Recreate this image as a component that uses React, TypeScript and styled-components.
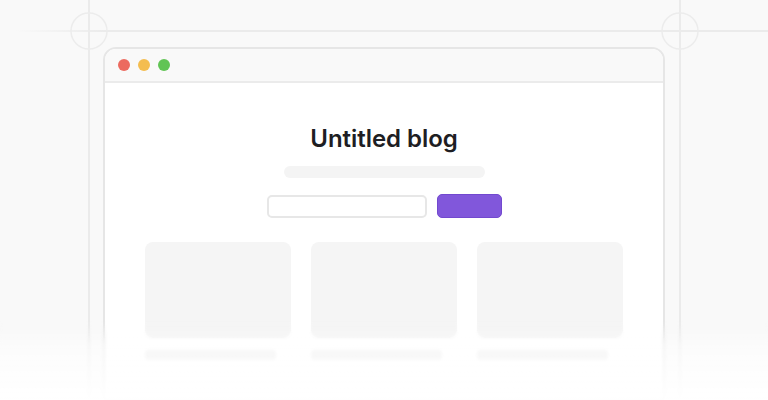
import React from "react";
import styled, { createGlobalStyle } from "styled-components";

const Global = createGlobalStyle`
  html, body { margin: 0; padding: 0; background: #f9f9f9; }
  body { font-family: Inter, "Noto Sans", sans-serif; }
`;

const Page = styled.div`
  position: relative;
  width: 768px;
  height: 400px;
  overflow: hidden;
  background: #f9f9f9;
  display: flex;
  flex-direction: column;
  align-items: flex-start;
  padding: 47px 0 0 103px;
  box-sizing: border-box;
`;

const Guides = styled.svg`
  position: absolute;
  left: 0;
  top: 0;
  width: 768px;
  height: 400px;
  pointer-events: none;
`;

const Window = styled.div`
  position: relative;
  width: 562px;
  height: 420px;
  box-sizing: border-box;
  border: 2px solid #e6e6e6;
  border-radius: 13px 13px 0 0;
  background: #fff;
  overflow: hidden;
  display: flex;
  flex-direction: column;
`;

const TitleBar = styled.div`
  height: 32px;
  flex: none;
  background: #f9f9f9;
  border-bottom: 2px solid #ebebeb;
  display: flex;
  align-items: center;
  gap: 8px;
  padding: 0 0 0 13px;
`;

const Dot = styled.span<{ $c: string }>`
  width: 12px;
  height: 12px;
  border-radius: 50%;
  background: ${(p) => p.$c};
`;

const Content = styled.div`
  display: flex;
  flex-direction: column;
  align-items: center;
  padding-top: 41px;
`;

const Title = styled.h1`
  margin: 0;
  font-family: Inter, sans-serif;
  font-size: 24px;
  line-height: 29px;
  font-weight: 600;
  color: #1e1e23;
  letter-spacing: -0.05px;
`;

const Subtitle = styled.div`
  margin-top: 13px;
  width: 201px;
  height: 12px;
  border-radius: 6px;
  background: #f4f4f4;
`;

const Form = styled.div`
  margin-top: 16px;
  display: flex;
  gap: 10px;
  align-items: center;
`;

const Input = styled.div`
  width: 160px;
  height: 23px;
  box-sizing: border-box;
  border: 2px solid #e7e7e7;
  border-radius: 5px;
  background: #fff;
`;

const Button = styled.div`
  width: 65px;
  height: 24px;
  box-sizing: border-box;
  border: 1px solid #7249cf;
  border-radius: 5px;
  background: #8157db;
`;

const Cards = styled.div`
  margin-top: 24px;
  display: grid;
  grid-template-columns: repeat(3, 146px);
  gap: 20px;
`;

const Card = styled.div`
  display: flex;
  flex-direction: column;
  gap: 12px;
`;

const Thumb = styled.div`
  height: 96px;
  border-radius: 8px;
  background: #f5f5f5;
`;

const Line = styled.div`
  width: 131px;
  height: 10px;
  border-radius: 4px;
  background: #eeeeee;
`;

const Fade = styled.div`
  position: absolute;
  left: 0;
  right: 0;
  bottom: 0;
  height: 80px;
  background: linear-gradient(to bottom, rgba(255,255,255,0) 0%, rgba(255,255,255,0.55) 40%, rgba(255,255,255,0.96) 100%);
  backdrop-filter: blur(1.5px);
  -webkit-mask-image: linear-gradient(to bottom, rgba(0,0,0,0) 0%, #000 30%);
  mask-image: linear-gradient(to bottom, rgba(0,0,0,0) 0%, #000 30%);
  pointer-events: none;
`;

export default function App() {
  return (
    <>
      <Global />
      <Page>
        <Guides viewBox="0 0 768 400">
          <defs>
            <linearGradient id="hfade" x1="0" x2="1" y1="0" y2="0">
              <stop offset="0" stopColor="#ebebeb" stopOpacity="0" />
              <stop offset="0.12" stopColor="#ebebeb" stopOpacity="1" />
              <stop offset="1" stopColor="#ebebeb" stopOpacity="1" />
            </linearGradient>
          </defs>
          <rect x="15" y="30" width="753" height="2" fill="url(#hfade)" />
          <rect x="88" y="0" width="2" height="400" fill="#ebebeb" />
          <rect x="679" y="0" width="2" height="400" fill="#ebebeb" />
          <circle cx="89" cy="31" r="18" fill="none" stroke="#ececec" strokeWidth="1.5" />
          <circle cx="680" cy="31" r="18" fill="none" stroke="#ececec" strokeWidth="1.5" />
        </Guides>
        <Window>
          <TitleBar>
            <Dot $c="#ec6a5f" />
            <Dot $c="#f4bd4f" />
            <Dot $c="#61c454" />
          </TitleBar>
          <Content>
            <Title>Untitled blog</Title>
            <Subtitle />
            <Form>
              <Input />
              <Button />
            </Form>
            <Cards>
              {[0, 1, 2].map((i) => (
                <Card key={i}>
                  <Thumb />
                  <Line />
                </Card>
              ))}
            </Cards>
          </Content>
        </Window>
        <Fade />
      </Page>
    </>
  );
}
